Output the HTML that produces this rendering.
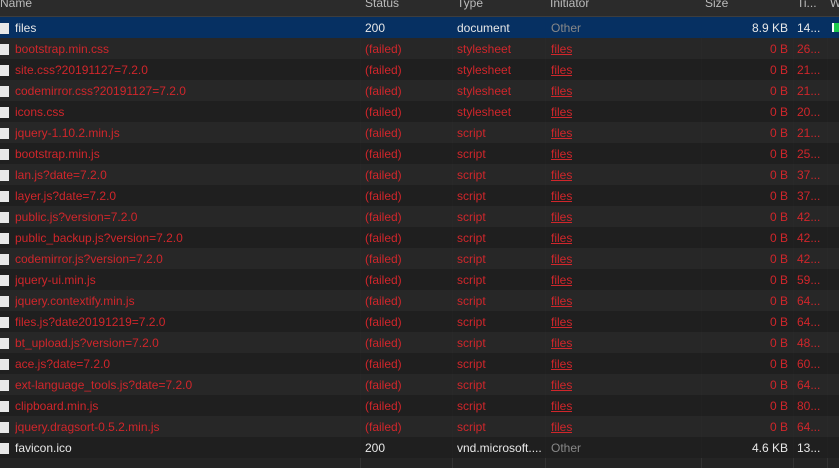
<!DOCTYPE html><html><head><style>
body{margin:0;width:839px;height:468px;background:#242424;overflow:hidden;font-family:"Liberation Sans",sans-serif;font-size:12px;position:relative}
.hd{position:absolute;left:0;top:0;width:839px;height:16px;background:#2b2b2b;border-bottom:1px solid #3d3d3d;color:#bbb;z-index:2}
.r{position:absolute;left:0;width:839px;height:21px;line-height:23px}
.c{position:absolute;top:0;white-space:nowrap;overflow:hidden}
.sep{position:absolute;top:0;width:1px;height:468px;background:#333}
.ic{position:absolute;left:0;top:6px;width:9px;height:11px;background:#e8e8e8}
u{color:#d0262b}
</style></head><body>
<div class="hd"><span class="c" style="left:0;top:-4px">Name</span><span class="c" style="left:365px;top:-4px">Status</span><span class="c" style="left:457px;top:-4px">Type</span><span class="c" style="left:550px;top:-4px">Initiator</span><span class="c" style="left:705px;top:-4px">Size</span><span class="c" style="left:797px;top:-4px">Ti...</span><span class="c" style="left:830px;top:-4px">W</span></div>
<div class="sep" style="left:360px"></div><div class="sep" style="left:452px"></div><div class="sep" style="left:545px"></div><div class="sep" style="left:701px"></div><div class="sep" style="left:793px"></div><div class="sep" style="left:827px"></div>
<div id="rows"></div>
<script>
var d=[["files","200","document","Other","8.9 KB","14..."],
["bootstrap.min.css","(failed)","stylesheet","files","0 B","26..."],
["site.css?20191127=7.2.0","(failed)","stylesheet","files","0 B","21..."],
["codemirror.css?20191127=7.2.0","(failed)","stylesheet","files","0 B","21..."],
["icons.css","(failed)","stylesheet","files","0 B","20..."],
["jquery-1.10.2.min.js","(failed)","script","files","0 B","21..."],
["bootstrap.min.js","(failed)","script","files","0 B","25..."],
["lan.js?date=7.2.0","(failed)","script","files","0 B","37..."],
["layer.js?date=7.2.0","(failed)","script","files","0 B","37..."],
["public.js?version=7.2.0","(failed)","script","files","0 B","42..."],
["public_backup.js?version=7.2.0","(failed)","script","files","0 B","42..."],
["codemirror.js?version=7.2.0","(failed)","script","files","0 B","42..."],
["jquery-ui.min.js","(failed)","script","files","0 B","59..."],
["jquery.contextify.min.js","(failed)","script","files","0 B","64..."],
["files.js?date20191219=7.2.0","(failed)","script","files","0 B","64..."],
["bt_upload.js?version=7.2.0","(failed)","script","files","0 B","48..."],
["ace.js?date=7.2.0","(failed)","script","files","0 B","60..."],
["ext-language_tools.js?date=7.2.0","(failed)","script","files","0 B","64..."],
["clipboard.min.js","(failed)","script","files","0 B","80..."],
["jquery.dragsort-0.5.2.min.js","(failed)","script","files","0 B","64..."],
["favicon.ico","200","vnd.microsoft....","Other","4.6 KB","13..."]];
var h="";
d.forEach(function(r,i){var y=17+21*i;var bg=i==0?"#063062":(i%2?"rgba(40,40,40,.85)":"rgba(31,31,31,.85)");var f=r[1]=="(failed)";var col=f?"#d0262b":"#e8e8e8";
h+='<div class="r" style="top:'+y+'px;background:'+bg+';color:'+col+'"><div class="ic"></div><span class="c" style="left:15px">'+r[0]+'</span><span class="c" style="left:365px">'+r[1]+'</span><span class="c" style="left:457px">'+r[2]+'</span><span class="c" style="left:551px">'+(f?'<u>files</u>':'<span style="color:#888">Other</span>')+'</span><span class="c" style="left:701px;width:87px;text-align:right">'+r[4]+'</span><span class="c" style="left:797px">'+r[5]+'</span>'+(i==0?'<div style="position:absolute;left:832px;top:6px;width:2px;height:9px;background:#fff"></div><div style="position:absolute;left:834px;top:6px;width:5px;height:9px;background:#1ec94d"></div>':'')+'</div>';});
document.getElementById("rows").innerHTML=h;
</script>
</body></html>
